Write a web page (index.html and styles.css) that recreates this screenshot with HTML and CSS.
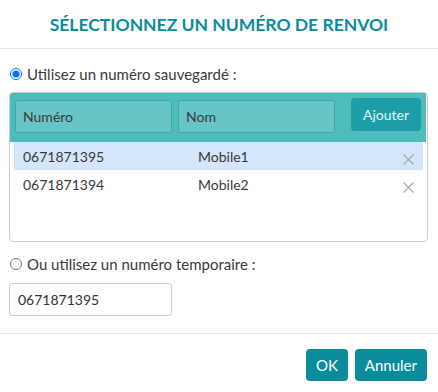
FILE: index.html
```html
<!DOCTYPE html>
<html lang="fr">
<head>
    <meta charset="UTF-8">
    <title>Renvoi</title>
    <link rel="stylesheet" href="styles.css">
</head>
<body>

<div class="modal">
    <div class="modal-header">
        <h1>Sélectionnez un numéro de renvoi</h1>
    </div>

    <div class="modal-body">
        <label class="choice"><input type="radio" name="mode" checked> Utilisez un numéro sauvegardé :</label>

        <div class="saved-box">
            <div class="add-bar">
                <input type="text" class="bar-input num" placeholder="Numéro">
                <input type="text" class="bar-input name" placeholder="Nom">
                <button class="btn-add">Ajouter</button>
            </div>
            <div class="list">
                <div class="row selected">
                    <span class="col-num">0671871395</span>
                    <span class="col-name">Mobile1</span>
                    <span class="del"><svg width="11" height="11" viewBox="0 0 11 11"><path d="M0.5 0.5 L10.5 10.5 M10.5 0.5 L0.5 10.5" stroke="#a9a9a9" stroke-width="1.2"/></svg></span>
                </div>
                <div class="row">
                    <span class="col-num">0671871394</span>
                    <span class="col-name">Mobile2</span>
                    <span class="del"><svg width="11" height="11" viewBox="0 0 11 11"><path d="M0.5 0.5 L10.5 10.5 M10.5 0.5 L0.5 10.5" stroke="#a9a9a9" stroke-width="1.2"/></svg></span>
                </div>
            </div>
        </div>

        <label class="choice second"><input type="radio" name="mode"> Ou utilisez un numéro temporaire :</label>
        <input type="text" class="temp-input" value="0671871395">
    </div>

    <div class="modal-footer">
        <button class="btn">OK</button>
        <button class="btn">Annuler</button>
    </div>
</div>

</body>
</html>
```

FILE: styles.css
```css
body {
    margin: 0;
    font-family: Lato, "Open Sans", sans-serif;
    background-color: #fff;
    color: #333;
}

.modal {
    width: 438px;
}

.modal-header {
    height: 48px;
    border-bottom: 1px solid #e5e5e5;
    display: flex;
    align-items: center;
    justify-content: center;
}

h1 {
    margin: 0;
    font-size: 17.5px;
    font-weight: 700;
    text-transform: uppercase;
    color: #0b8c9c;
}

.modal-body {
    padding: 14px 10px 17px 9px;
}

.choice {
    display: flex;
    align-items: center;
    height: 22px;
    font-size: 15px;
    color: #3a3a3a;
}

.choice input {
    margin: 0 5px 0 1px;
    width: 12px;
    height: 12px;
}

.choice.second {
    margin-top: 11px;
}

.saved-box {
    margin-top: 7px;
    height: 148px;
    border: 1px solid #ccc;
    border-radius: 4px;
    overflow: hidden;
}

.add-bar {
    height: 49px;
    background-color: #4fbcbc;
    display: flex;
    align-items: flex-start;
    padding: 5px 3px 0 5px;
    box-sizing: border-box;
    margin-right: 1px;
}

.bar-input {
    height: 33px;
    width: 157px;
    margin-top: 2px;
    box-sizing: border-box;
    background-color: #66c6c6;
    border: 1px solid #4aa3a3;
    border-radius: 3px;
    padding: 0 7px;
    font-family: inherit;
    font-size: 14px;
    color: #333;
}

.bar-input::placeholder {
    color: #3a3a3a;
}

.bar-input.name {
    margin-left: 6px;
}

.btn-add {
    margin-left: 16px;
    width: 70px;
    height: 33px;
    background-color: #1c9ea9;
    color: #e6f6f7;
    border: none;
    border-radius: 4px;
    font-family: inherit;
    font-size: 14px;
    padding: 0;
}

.list {
    padding: 0 4px;
}

.row {
    height: 28px;
    display: flex;
    align-items: center;
    font-size: 14px;
    padding-left: 9px;
    color: #3a3a3a;
}

.row.selected {
    background-color: #d4e6fb;
}

.col-num {
    width: 175px;
}

.col-name {
    flex: 1;
}

.del {
    width: 30px;
    display: flex;
    justify-content: center;
    margin-top: 6px;
}

.temp-input {
    display: block;
    margin-top: 8px;
    width: 163px;
    height: 33px;
    box-sizing: border-box;
    border: 1px solid #ccc;
    border-radius: 3px;
    padding: 0 8px;
    font-family: inherit;
    font-size: 14px;
    color: #333;
}

.modal-footer {
    border-top: 1px solid #e5e5e5;
    padding: 15px 11px 0 0;
    display: flex;
    justify-content: flex-end;
    gap: 7px;
}

.btn {
    height: 32px;
    padding: 0 10px;
    background-color: #0b8c9c;
    color: #fff;
    border: none;
    border-radius: 4px;
    font-family: inherit;
    font-size: 15px;
}
```
